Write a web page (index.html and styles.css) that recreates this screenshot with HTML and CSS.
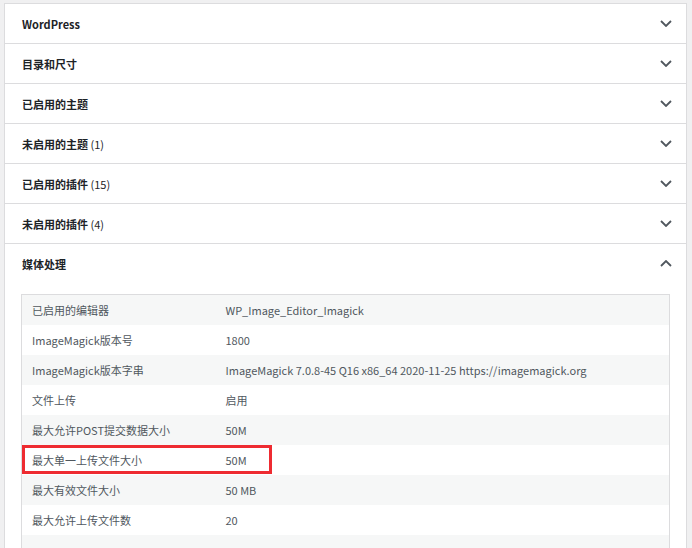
FILE: index.html
```html
<!DOCTYPE html>
<html lang="zh-CN">
<head>
<meta charset="utf-8">
<title>站点健康 - 信息</title>
<link rel="stylesheet" href="styles.css">
</head>
<body>
<div class="accordion">
  <div class="section">
    <div class="head"><span class="title">WordPress</span>
      <svg class="chev" viewBox="0 0 12 7"><path d="M1 1 L6 6 L11 1"/></svg></div>
  </div>
  <div class="section">
    <div class="head"><span class="title">目录和尺寸</span>
      <svg class="chev" viewBox="0 0 12 7"><path d="M1 1 L6 6 L11 1"/></svg></div>
  </div>
  <div class="section">
    <div class="head"><span class="title">已启用的主题</span>
      <svg class="chev" viewBox="0 0 12 7"><path d="M1 1 L6 6 L11 1"/></svg></div>
  </div>
  <div class="section">
    <div class="head"><span class="title">未启用的主题 <span class="count">(1)</span></span>
      <svg class="chev" viewBox="0 0 12 7"><path d="M1 1 L6 6 L11 1"/></svg></div>
  </div>
  <div class="section">
    <div class="head"><span class="title">已启用的插件 <span class="count">(15)</span></span>
      <svg class="chev" viewBox="0 0 12 7"><path d="M1 1 L6 6 L11 1"/></svg></div>
  </div>
  <div class="section">
    <div class="head"><span class="title">未启用的插件 <span class="count">(4)</span></span>
      <svg class="chev" viewBox="0 0 12 7"><path d="M1 1 L6 6 L11 1"/></svg></div>
  </div>
  <div class="section open">
    <div class="head"><span class="title">媒体处理</span>
      <svg class="chev" viewBox="0 0 12 7"><path d="M1 6 L6 1 L11 6"/></svg></div>
    <div class="panel">
      <div class="table-wrap">
        <table class="info">
          <tr><td class="label">已启用的编辑器</td><td>WP_Image_Editor_Imagick</td></tr>
          <tr><td class="label">ImageMagick版本号</td><td>1800</td></tr>
          <tr><td class="label">ImageMagick版本字串</td><td>ImageMagick 7.0.8-45 Q16 x86_64 2020-11-25 https://imagemagick.org</td></tr>
          <tr><td class="label">文件上传</td><td>启用</td></tr>
          <tr><td class="label">最大允许POST提交数据大小</td><td>50M</td></tr>
          <tr><td class="label">最大单一上传文件大小</td><td>50M</td></tr>
          <tr><td class="label">最大有效文件大小</td><td>50 MB</td></tr>
          <tr><td class="label">最大允许上传文件数</td><td>20</td></tr>
          <tr><td class="label">&nbsp;</td><td>&nbsp;</td></tr>
        </table>
        <div class="highlight"></div>
      </div>
    </div>
  </div>
</div>
</body>
</html>
```

FILE: styles.css
```css
html, body {
  margin: 0;
  padding: 0;
  height: 100%;
  overflow: hidden;
}
body {
  background: #f0f0f1;
  padding: 3px 5px 0 4px;
  box-sizing: border-box;
  font-family: "Noto Sans CJK SC", "Noto Sans", sans-serif;
  font-size: 11px;
  color: #3c434a;
}
.accordion {
  background: #fff;
  border: 1px solid #dcdcde;
  border-bottom: none;
  min-height: 100%;
}
.section {
  border-bottom: 1px solid #dcdcde;
}
.head {
  height: 39px;
  display: flex;
  align-items: center;
  justify-content: space-between;
  padding: 0 14px 0 17px;
}
.title {
  font-weight: 700;
  color: #1d2327;
  font-size: 11px;
}
.count {
  font-weight: 400;
}
.chev {
  width: 12px;
  height: 7px;
  fill: none;
  stroke: #50575e;
  stroke-width: 1.8;
}
.panel {
  padding: 11px 16px 0 16px;
}
.table-wrap {
  position: relative;
}
.info {
  width: 100%;
  border-collapse: collapse;
  border: 1px solid #dcdcde;
}
.info td {
  height: 30px;
  padding: 0 10px;
  box-sizing: border-box;
  vertical-align: middle;
  color: #50575e;
}
.info td.label {
  width: 194px;
}
.info tr:nth-child(odd) td {
  background: #f6f7f7;
}
.highlight {
  position: absolute;
  left: 1px;
  top: 151px;
  width: 244px;
  height: 23px;
  border: 3px solid #ee2b31;
}
```
